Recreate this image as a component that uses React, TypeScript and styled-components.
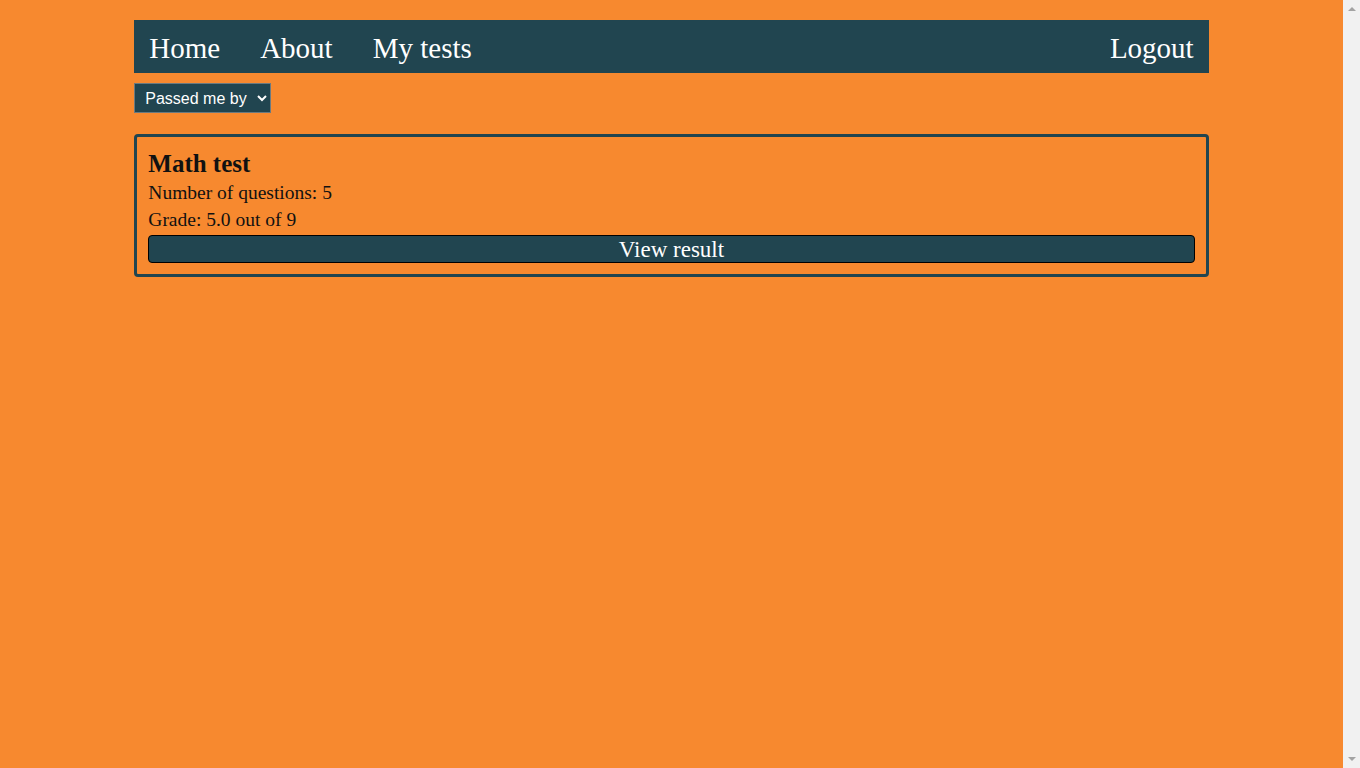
import React from "react";
import styled, { createGlobalStyle } from "styled-components";

const GlobalStyle = createGlobalStyle`
  html {
    background: #f1f1f1;
  }
  body {
    margin: 0 17px 0 0;
    min-height: 100vh;
    background: #f7892f;
    font-family: "Liberation Serif", "DejaVu Serif", serif;
    color: #111;
  }
`;

const Page = styled.div`
  width: 80%;
  margin: 0 auto;
  padding-top: 20px;
`;

const Nav = styled.nav`
  box-sizing: border-box;
  display: flex;
  align-items: center;
  justify-content: space-between;
  height: 53px;
  padding: 3px 15px 0;
  background: #214550;
`;

const NavGroup = styled.div`
  display: flex;
  align-items: center;
  gap: 40px;
`;

const NavLink = styled.a`
  color: #ffffff;
  font-size: 29px;
  text-decoration: none;
  cursor: pointer;
`;

const Filter = styled.select`
  display: block;
  margin-top: 10px;
  height: 30px;
  width: 137px;
  padding: 0 6px;
  background: #214550;
  color: #ffffff;
  border: 1px solid #6b7a80;
  font-family: "Liberation Sans", Arial, sans-serif;
  font-size: 16px;
`;

const Card = styled.section`
  margin-top: 21px;
  border: 3px solid #214550;
  border-radius: 4px;
  padding: 11px 11px 11px 11px;
`;

const Title = styled.h2`
  margin: 0;
  font-size: 25px;
  line-height: 31px;
  font-weight: bold;
  color: #111;
`;

const Info = styled.p`
  margin: 0;
  font-size: 19.5px;
  line-height: 27px;
`;

const ResultButton = styled.button`
  display: block;
  width: 100%;
  height: 28px;
  margin-top: 2px;
  background: #214550;
  color: #ffffff;
  border: 1px solid #000;
  border-radius: 4px;
  font-family: "Liberation Serif", "DejaVu Serif", serif;
  font-size: 23px;
  line-height: 26px;
  padding: 1px 0 0;
  cursor: pointer;
`;

const ScrollTrack = styled.div`
  position: fixed;
  top: 0;
  right: 0;
  width: 17px;
  height: 100vh;
  background: #f1f1f1;
  display: flex;
  flex-direction: column;
  justify-content: space-between;
  align-items: center;
  padding: 7px 0;
  box-sizing: border-box;
`;

const Arrow = styled.div<{ $down?: boolean }>`
  width: 0;
  height: 0;
  border-left: 4px solid transparent;
  border-right: 4px solid transparent;
  ${(p) =>
    p.$down
      ? "border-top: 4px solid #a3a3a3;"
      : "border-bottom: 4px solid #a3a3a3;"}
`;

export default function App() {
  return (
    <>
      <GlobalStyle />
      <Page>
        <Nav>
          <NavGroup>
            <NavLink>Home</NavLink>
            <NavLink>About</NavLink>
            <NavLink>My tests</NavLink>
          </NavGroup>
          <NavLink>Logout</NavLink>
        </Nav>
        <Filter defaultValue="passed">
          <option value="passed">Passed me by</option>
          <option value="created">Created by me</option>
        </Filter>
        <Card>
          <Title>Math test</Title>
          <Info>Number of questions: 5</Info>
          <Info>Grade: 5.0 out of 9</Info>
          <ResultButton>View result</ResultButton>
        </Card>
      </Page>
      <ScrollTrack>
        <Arrow />
        <Arrow $down />
      </ScrollTrack>
    </>
  );
}
